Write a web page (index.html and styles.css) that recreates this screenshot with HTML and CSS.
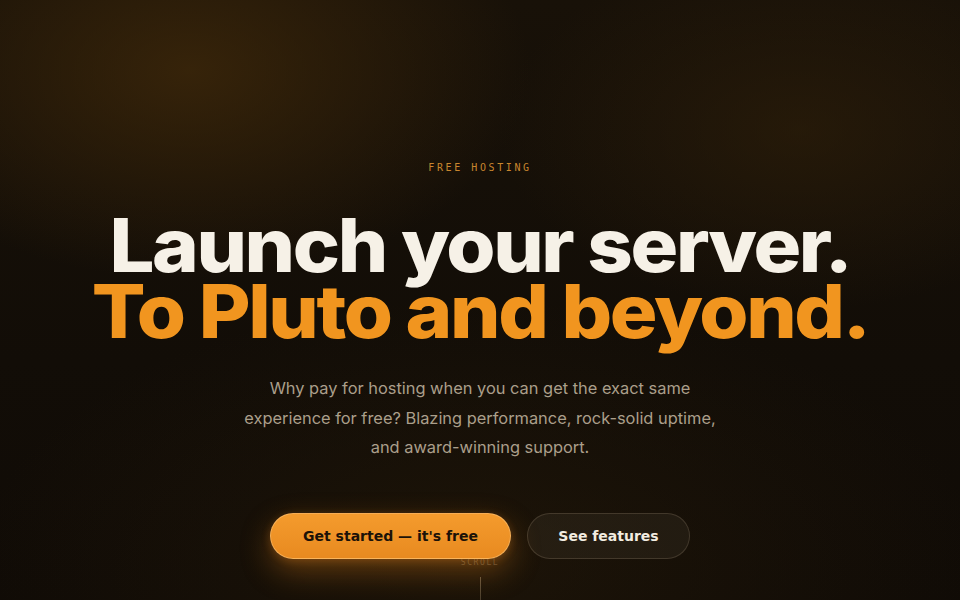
FILE: index.html
```html
<!DOCTYPE html>
<html lang="en">
<head>
<meta charset="utf-8">
<title>Launch your server</title>
<link rel="stylesheet" href="styles.css">
</head>
<body>
<main class="hero">
  <p class="eyebrow">FREE HOSTING</p>
  <h1 class="title">
    <span class="title-line title-light">Launch your server.</span>
    <span class="title-line title-accent">To Pluto and beyond.</span>
  </h1>
  <p class="lead">Why pay for hosting when you can get the exact same experience for free? Blazing performance, rock-solid uptime, and award-winning support.</p>
  <div class="actions">
    <a class="btn btn-primary" href="#">Get started — it's free</a>
    <a class="btn btn-ghost" href="#">See features</a>
  </div>
  <div class="scroll-hint">
    <span class="scroll-label">SCROLL</span>
    <span class="scroll-line"></span>
  </div>
</main>
</body>
</html>
```
FILE: styles.css
```css
* { box-sizing: border-box; }
html, body { margin: 0; padding: 0; }
body {
  background: #110c06;
  color: #f5f0e6;
  font-family: Inter, "Noto Sans", sans-serif;
  overflow: hidden;
}
.hero {
  position: relative;
  height: 600px;
  padding-top: 161px;
  text-align: center;
  background:
    radial-gradient(ellipse 340px 210px at 190px 70px, rgba(62,40,10,0.8), rgba(62,40,10,0) 100%),
    radial-gradient(ellipse 300px 180px at 800px 130px, rgba(48,32,10,0.6), rgba(48,32,10,0) 100%),
    radial-gradient(ellipse 500px 260px at 480px 560px, rgba(40,28,10,0.5), rgba(40,28,10,0) 100%),
    linear-gradient(180deg, #181108 0%, #120d07 60%, #100b06 100%);
}
.eyebrow {
  margin: 0;
  font-family: "DejaVu Sans Mono", "Liberation Mono", monospace;
  font-size: 10px;
  line-height: 14px;
  letter-spacing: 0.26em;
  color: #c8862e;
}
.title {
  margin: 37px 0 0;
  font-family: Inter, "Noto Sans", sans-serif;
  font-weight: 800;
  font-size: 74px;
  line-height: 66px;
  letter-spacing: -0.03em;
}
.title-line {
  display: block;
  transform: scaleX(1.075);
}
.title-light { color: #f6f1e7; }
.title-accent { color: #f1951f; }
.lead {
  margin: 30px auto 0;
  max-width: 484px;
  font-family: Inter, "Noto Sans", sans-serif;
  font-size: 16.4px;
  line-height: 29.5px;
  color: #ab9f8b;
}
.actions {
  margin-top: 50px;
  display: flex;
  justify-content: center;
  gap: 16px;
}
.btn {
  position: relative;
  z-index: 2;
  display: inline-flex;
  align-items: center;
  justify-content: center;
  height: 46px;
  padding: 0 16px;
  border-radius: 999px;
  font-family: "DejaVu Sans", Inter, sans-serif;
  font-weight: 700;
  font-size: 14px;
  text-decoration: none;
  white-space: nowrap;
}
.btn-primary {
  width: 241px;
  color: #1b1208;
  background: linear-gradient(180deg, #f49b2d 0%, #e88a20 100%);
  border: 1px solid rgba(255, 196, 120, 0.6);
  box-shadow: 0 12px 30px rgba(236, 136, 30, 0.35), 0 2px 8px rgba(236, 136, 30, 0.25);
}
.btn-ghost {
  width: 163px;
  color: #f2ece0;
  background: rgba(255, 240, 210, 0.05);
  border: 1px solid rgba(255, 235, 200, 0.14);
}
.scroll-hint {
  position: absolute;
  left: 0;
  right: 0;
  top: 557px;
  display: flex;
  flex-direction: column;
  align-items: center;
  z-index: 1;
}
.scroll-label {
  font-family: "DejaVu Sans Mono", monospace;
  font-size: 8px;
  letter-spacing: 0.2em;
  color: rgba(150, 130, 100, 0.5);
  line-height: 12px;
}
.scroll-line {
  margin-top: 8px;
  width: 1px;
  height: 30px;
  background: linear-gradient(180deg, rgba(150, 130, 100, 0.6), rgba(150, 130, 100, 0.3));
}
```
